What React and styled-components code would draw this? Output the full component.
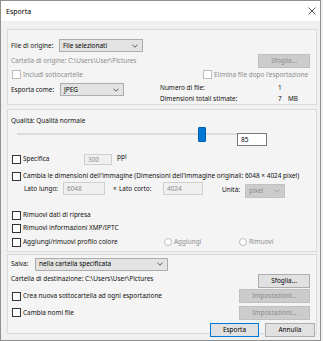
import React from "react";
import styled, { createGlobalStyle } from "styled-components";

const GlobalStyle = createGlobalStyle`
  html, body {
    margin: 0;
    padding: 0;
    background: #f3f3f3;
  }
  body {
    font-family: "Noto Sans", "Liberation Sans", sans-serif;
    font-size: 6.45px;
    color: #111;
  }
`;

export default function App() {
    return (
        <>
            <GlobalStyle />
            <Window>
                <TitleBar>
                    <Title>Esporta</Title>
                    <CloseIcon width="8" height="8" viewBox="0 0 8 8">
                        <path d="M0.5 0.5 L7.5 7.5 M7.5 0.5 L0.5 7.5" />
                    </CloseIcon>
                </TitleBar>

                <Body>
                    {/* origine */}
                    <Panel $h={76}>
                        <Row $h={13} $mt={9}>
                            <Label $w={48}>File di origine:</Label>
                            <Select $w={84} value="File selezionati" />
                        </Row>
                        <Row $h={14} $mt={2}>
                            <Text $muted>Cartella di origine: C:\Users\User\Pictures</Text>
                            <Spacer />
                            <Button $w={52} $disabled>Sfoglia...</Button>
                        </Row>
                        <Row $h={11} $mt={1}>
                            <Check $w={191} $disabled label="Includi sottocartelle" />
                            <Check $disabled label="Elimina file dopo l'esportazione" />
                        </Row>
                        <Row $h={21} $mt={3} $align="flex-start">
                            <LeftBlock>
                                <Label $w={49}>Esporta come:</Label>
                                <Select $w={64} value="JPEG" />
                            </LeftBlock>
                            <InfoGrid>
                                <span>Numero di file:</span>
                                <span>1</span>
                                <span></span>
                                <span>Dimensioni totali stimate:</span>
                                <span>7</span>
                                <span>MB</span>
                            </InfoGrid>
                        </Row>
                    </Panel>

                    {/* qualità e dimensioni */}
                    <Panel $h={143} $mt={4}>
                        <Row $h={11} $mt={5}>
                            <Text>Qualità: Qualità normale</Text>
                        </Row>
                        <Row $h={19} $mt={1} $align="flex-start">
                            <Slider>
                                <Track />
                                <Thumb style={{ left: `${(85 / 100) * 213}px` }} />
                            </Slider>
                            <Input $w={30} $mt={6} value="85" readOnly />
                        </Row>
                        <Row $h={10} $mt={8}>
                            <Check $w={73} label="Specifica" />
                            <Input $w={28} $h={11} $disabled value="300" readOnly />
                            <Unit>ppi</Unit>
                        </Row>
                        <Row $h={10} $mt={7}>
                            <Check label="Cambia le dimensioni dell'immagine (Dimensioni dell'immagine originali: 6048 × 4024 pixel)" />
                        </Row>
                        <Row $h={16} $mt={1} $align="flex-start" $indent={13}>
                            <Label $w={39} $mt={2}>Lato lungo:</Label>
                            <Input $w={42} $disabled value="6048" readOnly />
                            <Label $w={6} $ml={8} $mt={2}>×</Label>
                            <Label $w={44} $mt={2}>Lato corto:</Label>
                            <Input $w={40} $disabled value="4024" readOnly />
                            <Label $w={23} $ml={19} $mt={3}>Unità:</Label>
                            <Select $w={40} $h={14} $mt={2} $disabled value="pixel" />
                        </Row>
                        <Row $h={10} $mt={12}>
                            <Check label="Rimuovi dati di ripresa" />
                        </Row>
                        <Row $h={10} $mt={3}>
                            <Check label="Rimuovi informazioni XMP/IPTC" />
                        </Row>
                        <Row $h={10} $mt={4}>
                            <Check $w={152} label="Aggiungi/rimuovi profilo colore" />
                            <Radio $w={75} $disabled label="Aggiungi" />
                            <Radio $disabled label="Rimuovi" />
                        </Row>
                    </Panel>

                    {/* destinazione */}
                    <Panel $h={80} $mt={2}>
                        <Row $h={12} $mt={3}>
                            <Label $w={24}>Salva:</Label>
                            <Select $w={133} value="nella cartella specificata" />
                        </Row>
                        <Row $h={14} $mt={4} $align="flex-start">
                            <Text>Cartella di destinazione: C:\Users\User\Pictures</Text>
                            <Spacer />
                            <Button $w={52}>Sfoglia...</Button>
                        </Row>
                        <Row $h={14} $mt={1}>
                            <Check label="Crea nuova sottocartella ad ogni esportazione" />
                            <Spacer />
                            <Button $w={71} $disabled>Impostazioni...</Button>
                        </Row>
                        <Row $h={13} $mt={3}>
                            <Check label="Cambia nomi file" />
                            <Spacer />
                            <Button $w={71} $disabled>Impostazioni...</Button>
                        </Row>
                    </Panel>

                    <ButtonBar>
                        <Button $w={49} $primary>Esporta</Button>
                        <Button $w={50}>Annulla</Button>
                    </ButtonBar>
                </Body>
            </Window>
        </>
    );
}

function Select({ value, ...rest }) {
    return (
        <SelectBox {...rest}>
            <span>{value}</span>
            <Chevron width="6" height="4" viewBox="0 0 6 4" $disabled={rest.$disabled}>
                <polyline points="0.5,0.7 3,3.2 5.5,0.7" />
            </Chevron>
        </SelectBox>
    );
}

function Check({ label, $w, $disabled }) {
    return (
        <Choice $w={$w} $disabled={$disabled}>
            <Box $disabled={$disabled} />
            <span>{label}</span>
        </Choice>
    );
}

function Radio({ label, $w, $disabled }) {
    return (
        <Choice $w={$w} $disabled={$disabled}>
            <Dot $disabled={$disabled} />
            <span>{label}</span>
        </Choice>
    );
}

const Window = styled.div`
    width: 321px;
    height: 341px;
    box-sizing: border-box;
    border: 1px solid #8f8f8f;
    background: #f0f0f0;
    display: flex;
    flex-direction: column;
    overflow: hidden;
`;

const TitleBar = styled.div`
    height: 20px;
    flex: none;
    background: #fff;
    display: flex;
    align-items: center;
    justify-content: space-between;
    padding: 0 4px 0 5px;
`;

const Title = styled.span`
    font-size: 7px;
    color: #000;
`;

const CloseIcon = styled.svg`
    path {
        stroke: #222;
        stroke-width: 0.8;
        fill: none;
    }
`;

const Body = styled.div`
    padding: 8px 3px 0 6px;
    display: flex;
    flex-direction: column;
`;

const Panel = styled.section`
    height: ${(p) => p.$h}px;
    margin-top: ${(p) => p.$mt || 0}px;
    box-sizing: border-box;
    border: 1px solid #dadada;
    background: #f4f4f4;
    padding: 0 6px 0 3px;
    display: flex;
    flex-direction: column;
`;

const Row = styled.div`
    height: ${(p) => p.$h}px;
    margin-top: ${(p) => p.$mt || 0}px;
    padding-left: ${(p) => p.$indent || 0}px;
    flex: none;
    display: flex;
    align-items: ${(p) => p.$align || "center"};
    line-height: 10px;
    white-space: nowrap;
`;

const Spacer = styled.div`
    flex: 1;
`;

const Label = styled.span`
    width: ${(p) => p.$w}px;
    margin-left: ${(p) => p.$ml || 0}px;
    margin-top: ${(p) => p.$mt || 0}px;
    flex: none;
    line-height: 10px;
`;

const Text = styled.span`
    color: ${(p) => (p.$muted ? "#8c8c8c" : "#111")};
`;

const SelectBox = styled.div`
    width: ${(p) => p.$w}px;
    height: ${(p) => p.$h || 13}px;
    margin-top: ${(p) => p.$mt || 0}px;
    box-sizing: border-box;
    flex: none;
    display: flex;
    align-items: center;
    justify-content: space-between;
    padding: 0 4px 0 3px;
    background: ${(p) => (p.$disabled ? "#cccccc" : "#e3e3e3")};
    border: 1px solid ${(p) => (p.$disabled ? "#c2c2c2" : "#adadad")};
    color: ${(p) => (p.$disabled ? "#8a8a8a" : "#000")};
`;

const Chevron = styled.svg`
    polyline {
        fill: none;
        stroke: ${(p) => (p.$disabled ? "#9a9a9a" : "#333")};
        stroke-width: 0.8;
    }
`;

const Button = styled.div`
    width: ${(p) => p.$w}px;
    height: 14px;
    box-sizing: border-box;
    flex: none;
    display: flex;
    align-items: center;
    justify-content: center;
    background: ${(p) => (p.$disabled ? "#cccccc" : "#e1e1e1")};
    border: 1px solid
        ${(p) => (p.$primary ? "#0078d7" : p.$disabled ? "#bfbfbf" : "#adadad")};
    color: ${(p) => (p.$disabled ? "#8a8a8a" : "#000")};
`;

const ButtonBar = styled.div`
    margin-top: -11px;
    padding-right: 2px;
    display: flex;
    justify-content: flex-end;
    gap: 6px;
    line-height: 10px;
`;

const Choice = styled.div`
    width: ${(p) => (p.$w ? `${p.$w}px` : "auto")};
    flex: none;
    display: flex;
    align-items: center;
    gap: 2px;
    padding-left: 1px;
    box-sizing: border-box;
    color: ${(p) => (p.$disabled ? "#8c8c8c" : "#111")};
`;

const Box = styled.span`
    width: 9px;
    height: 9px;
    box-sizing: border-box;
    flex: none;
    background: #fff;
    border: 1px solid ${(p) => (p.$disabled ? "#bcbcbc" : "#333")};
`;

const Dot = styled.span`
    width: 8px;
    height: 8px;
    box-sizing: border-box;
    flex: none;
    border-radius: 50%;
    background: #fff;
    border: 1px solid ${(p) => (p.$disabled ? "#bcbcbc" : "#333")};
`;

const Input = styled.input`
    width: ${(p) => p.$w}px;
    height: ${(p) => p.$h || 13}px;
    margin-top: ${(p) => p.$mt || 0}px;
    box-sizing: border-box;
    flex: none;
    padding: 0 3px;
    font: inherit;
    outline: none;
    background: ${(p) => (p.$disabled ? "#f0f0f0" : "#fff")};
    border: 1px solid ${(p) => (p.$disabled ? "#cfcfcf" : "#7a7a7a")};
    color: ${(p) => (p.$disabled ? "#8a8a8a" : "#000")};
`;

const Unit = styled.span`
    margin-left: 5px;
    align-self: flex-start;
    line-height: 5px;
`;

const Slider = styled.div`
    position: relative;
    width: 220px;
    height: 15px;
    margin-left: 6px;
    flex: none;
`;

const Track = styled.div`
    margin-top: 6px;
    height: 2px;
    background: #dcdcdc;
`;

const Thumb = styled.div`
    position: absolute;
    top: 0;
    width: 8px;
    height: 15px;
    box-sizing: border-box;
    background: #0078d7;
    border: 1px solid #005fb0;
    border-radius: 1px;
`;

const LeftBlock = styled.div`
    width: 149px;
    flex: none;
    display: flex;
    align-items: center;
    height: 13px;
`;

const InfoGrid = styled.div`
    display: grid;
    grid-template-columns: 118px 10px auto;
    line-height: 10.5px;
`;
